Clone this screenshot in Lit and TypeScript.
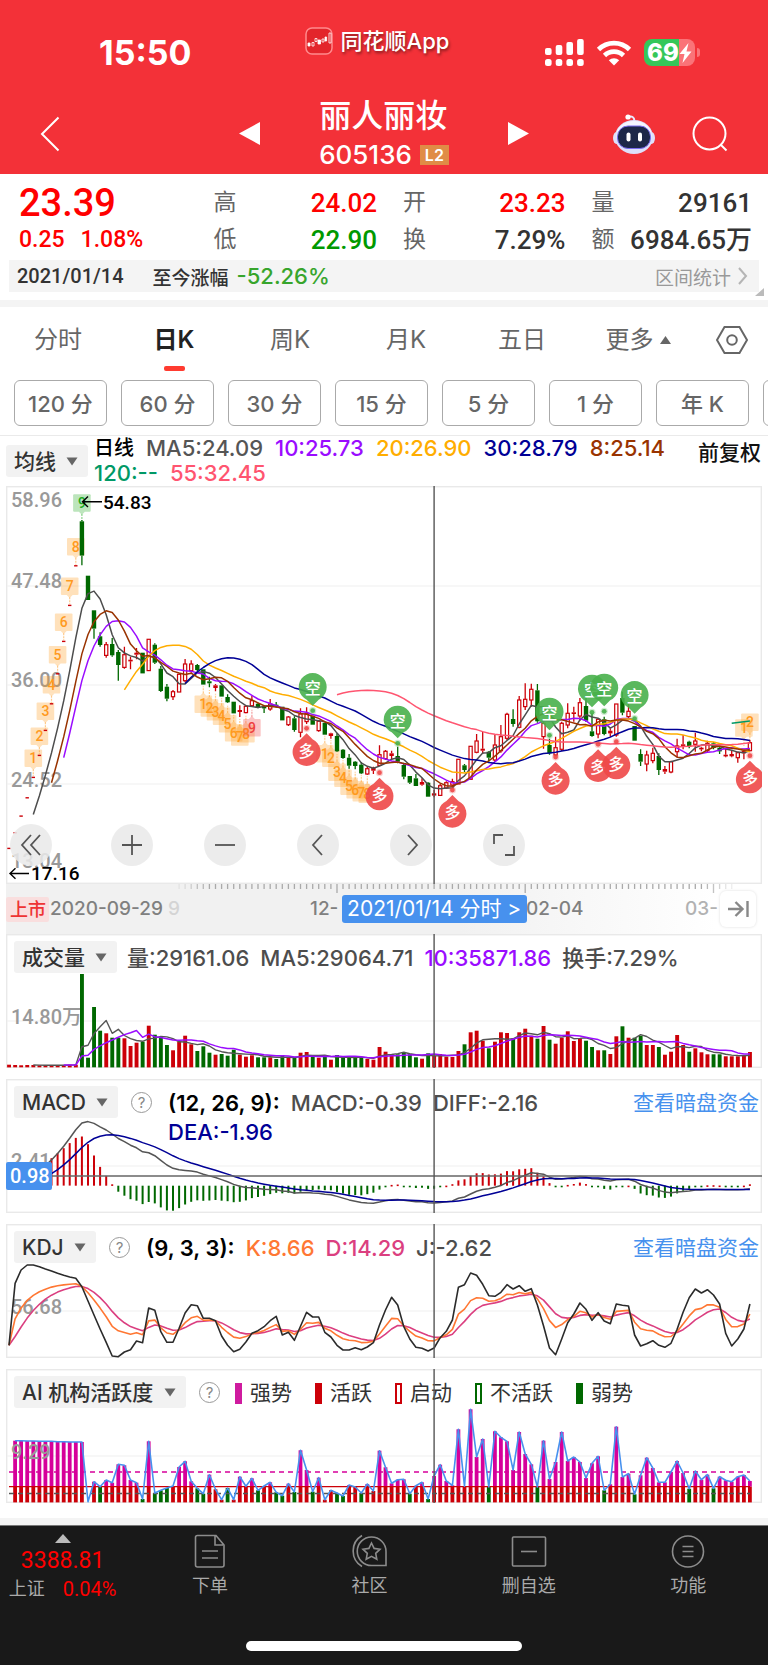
import { LitElement, html, svg, css, nothing } from "lit";
import { customElement, property } from "lit/decorators.js";

/* ---------- market data ---------- */

/** One trading day: high, body top, body bottom, low (chart units, 0 = top), r = up / g = down. */
type Day = [number, number, number, number, "r" | "g"];

const flat = (y: number): Day => [y, y, y, y, "r"];

const DAYS: Day[] = [
  ...[1105, 1058, 1008, 953, 892, 826, 751, 671, 581, 484, 376, 257].map(flat),
  [120, 124, 227, 256, "g"], [287, 287, 360, 360, "g"], [391, 391, 446, 476, "g"], [457, 469, 495, 500, "g"],
  [486, 494, 526, 533, "r"], [474, 492, 526, 530, "g"], [510, 516, 555, 602, "g"], [500, 524, 562, 566, "r"],
  [530, 539, 544, 568, "r"], [504, 518, 524, 538, "r"], [518, 518, 580, 580, "g"], [478, 478, 572, 572, "r"],
  [490, 494, 548, 552, "g"], [558, 566, 633, 636, "g"], [612, 620, 656, 664, "g"], [630, 635, 650, 660, "r"],
  [583, 583, 636, 636, "r"], [537, 552, 602, 607, "r"], [541, 552, 572, 578, "r"], [552, 555, 570, 574, "g"],
  [568, 568, 614, 614, "g"], [590, 604, 610, 622, "g"], [612, 616, 624, 634, "r"], [616, 616, 650, 650, "g"],
  [643, 651, 667, 669, "g"], [665, 665, 700, 700, "g"], [676, 690, 696, 711, "r"], [676, 679, 698, 700, "r"],
  [647, 662, 677, 681, "r"], [668, 671, 683, 685, "g"], [676, 680, 685, 699, "g"], [657, 672, 687, 692, "r"],
  [666, 674, 679, 683, "g"], [680, 680, 721, 721, "g"], [709, 711, 734, 738, "r"], [709, 715, 750, 755, "g"],
  [685, 702, 757, 772, "r"], [682, 700, 725, 732, "r"], [707, 707, 734, 734, "g"], [720, 724, 752, 755, "r"],
  [728, 728, 764, 764, "g"], [758, 760, 768, 776, "r"], [760, 768, 814, 816, "g"], [807, 809, 834, 836, "g"],
  [822, 833, 857, 866, "g"], [843, 845, 858, 868, "g"], [846, 854, 880, 882, "g"], [860, 866, 882, 884, "r"],
  [860, 864, 872, 882, "r"], [796, 824, 856, 858, "r"], [810, 814, 836, 840, "r"],
  [812, 820, 828, 840, "r"], [800, 828, 845, 850, "g"], [848, 855, 890, 898, "g"], [888, 888, 908, 912, "g"],
  [882, 895, 918, 918, "g"], [895, 906, 914, 917, "r"], [906, 908, 950, 950, "g"], [930, 940, 947, 952, "r"],
  [912, 917, 946, 948, "r"], [904, 908, 924, 926, "r"], [896, 905, 915, 920, "r"], [838, 838, 912, 912, "r"],
  [852, 856, 870, 876, "g"], [799, 799, 898, 898, "r"], [762, 783, 817, 820, "r"], [755, 806, 812, 822, "r"],
  [813, 815, 833, 845, "g"], [765, 795, 840, 845, "r"], [735, 770, 812, 818, "r"], [698, 703, 775, 780, "r"],
  [688, 717, 732, 740, "g"], [648, 660, 742, 745, "r"], [610, 658, 680, 690, "r"], [611, 628, 660, 680, "r"],
  [612, 631, 724, 728, "g"], [722, 730, 770, 806, "r"], [776, 795, 820, 824, "g"], [770, 803, 825, 828, "r"],
  [725, 730, 808, 813, "r"], [670, 700, 735, 745, "r"], [680, 697, 702, 725, "r"], [654, 668, 708, 722, "r"],
  [650, 678, 722, 726, "g"], [700, 754, 768, 770, "g"], [715, 718, 762, 775, "r"], [710, 718, 762, 766, "g"],
  [745, 752, 760, 770, "r"], [672, 672, 765, 770, "r"], [635, 654, 698, 706, "g"], [670, 694, 710, 716, "r"],
  [738, 738, 782, 782, "g"], [808, 822, 845, 858, "g"], [812, 825, 852, 874, "r"], [803, 820, 842, 850, "r"],
  [820, 828, 870, 885, "g"], [858, 867, 875, 882, "r"], [842, 845, 876, 880, "r"], [776, 798, 815, 832, "r"],
  [765, 793, 800, 808, "r"], [782, 785, 800, 805, "g"], [758, 783, 793, 815, "r"], [800, 803, 808, 814, "r"],
  [782, 790, 812, 818, "r"], [786, 790, 804, 808, "g"], [798, 803, 814, 822, "g"], [806, 824, 829, 832, "r"],
  [810, 822, 829, 832, "r"], [815, 818, 833, 848, "r"], [806, 812, 820, 838, "r"], [780, 788, 812, 814, "r"],
];

const VOLUME = [
  419, 420, 421, 420, 420, 421, 421, 421, 420, 420, 419, 419, 147, 398, 246, 317, 325, 338, 338, 340, 363, 353, 350,
  302, 329, 337, 360, 376, 350, 332, 358, 378, 364, 383, 389, 387, 392, 374, 389, 395, 391, 397, 397, 397, 402, 390,
  399, 399, 383, 381, 395, 398, 395, 404, 390, 397, 398, 398, 398, 402, 404, 366, 380, 391, 388, 383, 388, 397, 401,
  385, 392, 387, 395, 396, 378, 358, 322, 317, 347, 370, 350, 322, 324, 341, 322, 311, 332, 341, 303, 344, 356, 338,
  319, 348, 340, 347, 366, 376, 376, 387, 334, 304, 338, 338, 332, 360, 360, 366, 389, 380, 330, 360, 380, 370, 382,
  388, 388, 388, 394, 394, 394, 390, 381,
];

const KDJ_J = [
  391, 205, 165, 150, 150, 155, 162, 168, 175, 181, 186, 190, 215, 258, 300, 342, 382, 423, 425, 411, 404, 378, 383,
  279, 286, 350, 382, 382, 340, 294, 269, 272, 310, 310, 317, 363, 391, 410, 403, 381, 355, 347, 335, 317, 304, 360,
  352, 376, 334, 292, 306, 306, 352, 366, 391, 405, 405, 398, 404, 396, 383, 330, 285, 247, 270, 335, 372, 397, 400,
  408, 399, 368, 349, 315, 217, 209, 174, 181, 208, 242, 244, 232, 209, 222, 212, 229, 221, 270, 332, 399, 419, 372,
  323, 297, 264, 283, 316, 293, 318, 326, 267, 271, 273, 360, 393, 386, 377, 391, 397, 385, 343, 292, 248, 222, 234,
  224, 240, 267, 355, 393, 372, 342, 267,
];

const ACTIVITY = [
  862, 677, 677, 678, 678, 679, 679, 679, 680, 680, 681, 681, 681, 860, 800, 815, 795, 803, 748, 751, 795, 803, 852,
  679, 834, 826, 819, 813, 756, 739, 799, 820, 836, 779, 823, 854, 819, 854, 785, 814, 790, 826, 813, 802, 832, 842,
  806, 831, 706, 765, 830, 788, 854, 826, 834, 843, 810, 816, 834, 807, 828, 707, 757, 805, 794, 793, 836, 812, 802,
  852, 783, 749, 798, 811, 643, 814, 583, 726, 672, 816, 649, 667, 679, 765, 651, 717, 748, 816, 677, 792, 741, 651,
  738, 726, 741, 789, 745, 724, 826, 808, 635, 786, 776, 838, 781, 728, 759, 802, 802, 771, 738, 774, 821, 768, 794,
  779, 820, 785, 796, 800, 785, 780, 798,
];
const WEAK_DAYS = new Set([15, 22, 24, 25, 26, 31, 32, 36, 41, 44, 45, 47, 50, 54, 55, 58, 66, 69, 79, 87, 98, 103, 112, 116]);

/** Countdown flags: [day, digit], and [day, digit, y of the flag's centre]. */
const FLAGS_UP: [number, number][] = [[4, 1], [5, 2], [6, 3], [7, 4], [8, 5], [9, 6], [10, 7], [11, 8]];
const FLAGS_DOWN: [number, number, number][] = [
  [32, 1, 673], [33, 2, 684], [34, 3, 695], [35, 4, 709], [36, 5, 731], [37, 6, 758], [38, 7, 771], [39, 8, 761],
  [52, 1, 821], [53, 2, 835], [54, 3, 877], [55, 4, 895], [56, 5, 919], [57, 6, 929], [58, 7, 938], [59, 8, 943],
];
const SELL: [number, number][] = [[50, 692], [64, 790], [89, 766], [96, 697], [98, 694], [103, 716]];
const BUY: [number, number][] = [[49, 745], [61, 878], [73, 930], [90, 831], [97, 793], [100, 785], [122, 827]];

/* ---------- geometry ---------- */

const CURSOR_DAY = 70;
const UNIT = 3;
const X = (i: number) => 3 + (i * 18.22) / UNIT;
const n = (v: number) => Math.round(v * 10) / 10;
const scale = (origin: number) => (v: number) => (v - origin) / UNIT;

const RED = "#cc0008";
const GREEN = "#006800";

function average(values: number[], span: number): (number | null)[] {
  let sum = 0;
  return values.map((v, i) => {
    sum += v;
    if (i >= span) sum -= values[i - span];
    return i >= span - 1 ? sum / span : null;
  });
}

function ema(values: number[], span: number): number[] {
  let last = values[0];
  return values.map((v) => (last += ((v - last) * 2) / (span + 1)));
}

function line(values: (number | null)[], y: (v: number) => number, color: string, width = 1.4) {
  const points = values.map((v, i) => (v === null ? "" : `${n(X(i))},${n(y(v))}`)).filter(Boolean).join(" ");
  return svg`<polyline points=${points} fill="none" stroke=${color} stroke-width=${width} stroke-linejoin="round"></polyline>`;
}

const CLOSES = DAYS.map((d) => (d[4] === "r" ? d[1] : d[2]));

const cursor = (h: number) =>
  svg`<line x1=${n(X(CURSOR_DAY))} x2=${n(X(CURSOR_DAY))} y1="0" y2=${h} stroke="#555" stroke-width="1.4"></line>`;

const frame = (h: number, ...grid: number[]) => svg`
  <rect x="0.7" y="0.7" width="754.6" height=${h - 1.4} fill="none" stroke="#e9e9e9" stroke-width="1.4"></rect>
  ${grid.map((g) => svg`<line x1="1" x2="755" y1=${g} y2=${g} stroke="#efefef" stroke-width="1.2"></line>`)}`;

/* ---------- plots ---------- */

function pricePlot() {
  const y = scale(18);
  const candle = ([h, t, b, l, c]: Day, i: number) => {
    const x = n(X(i));
    const color = c === "r" ? RED : GREEN;
    if (h === l) return svg`<rect x=${n(x - 1.7)} y=${n(y(t) - 0.6)} width="3.4" height="1.4" fill=${color}></rect>`;
    const solid = c === "g" || b - t < 9;
    return svg`
      <path d="M${x} ${n(y(h))}V${n(y(t))}M${x} ${n(y(b))}V${n(y(l))}" stroke=${color} stroke-width="1.3"></path>
      <rect x=${n(x - (solid ? 2.2 : 1.6))} y=${n(y(t))} width=${solid ? 4.4 : 3.2}
        height=${n((b - t) / UNIT)} fill=${solid ? color : "#fff"} stroke=${solid ? "none" : color} stroke-width="1.2"></rect>`;
  };
  const flag = (i: number, digit: number, cy: number, kind = "orange", tip = 1) => {
    const x = n(X(i));
    const c = n(y(cy));
    return svg`
      <g class="flag ${kind}">
        <rect x=${n(x - 8.8)} y=${n(c - 8.8)} width="17.6" height="17.6" rx="1"></rect>
        <path d="M${n(x - 3)} ${n(c + 8.8 * tip)}h6l-3 ${3 * tip}z"></path>
        <line x1=${x} x2=${x} y1=${n(c + 11 * tip)} y2=${n(c + 18 * tip)}></line>
        <text x=${x} y=${n(c + 5)}>${digit}</text>
      </g>`;
  };
  const balloon = (i: number, dot: number, label: string, color: string, dir: number) => {
    const x = n(X(i));
    const d = y(dot);
    const c = n(d + 22.3 * dir);
    return svg`
      <g fill=${color}>
        <circle cx=${x} cy=${n(d)} r="3.6" opacity="0.25"></circle>
        <circle cx=${x} cy=${n(d)} r="2.4" opacity="0.9"></circle>
        <g opacity="0.9">
          <path d="M${x} ${n(d + 5 * dir)}L${n(x - 6)} ${n(d + 11 * dir)}A14 14 0 1 ${dir > 0 ? 0 : 1} ${n(x + 6)} ${n(d + 11 * dir)}Z"></path>
        </g>
        <text class="mark" x=${x} y=${n(c + 6)}>${label}</text>
      </g>`;
  };
  const averages: [number, string][] = [
    [5, "#4d4d4d"], [10, "#9a0cff"], [20, "#ffad00"], [30, "#000096"], [8, "#993300"], [120, "#009966"], [55, "#ff5570"],
  ];
  const levels: [string, number][] = [["58.96", 21], ["47.48", 102], ["36.00", 201], ["24.52", 301], ["13.04", 382]];
  const ticks = Array.from({ length: 92 }, (_, k) => k + 28);
  return svg`
    ${frame(398, 100, 199, 298)}
    ${levels.map(([t, ty]) => svg`<text class="level" x="5" y=${ty}>${t}</text>`)}
    ${FLAGS_UP.map(([i, d]) => flag(i, d, DAYS[i][1] - 57))}
    ${FLAGS_DOWN.map(([i, d, cy]) => flag(i, d, cy, "orange", -1))}
    ${flag(40, 9, 743, "pink", -1)}
    ${flag(12, 9, 69, "green")}
    ${flag(121, 1, 744)}${flag(122, 2, 727)}
    ${DAYS.map(candle)}
    ${averages.map(([span, color]) => line(average(CLOSES, span), y, color, 1.5))}
    ${SELL.map(([i, d]) => balloon(i, d, "空", "#48b04b", -1))}
    ${BUY.map(([i, d]) => balloon(i, d, "多", "#ee4848", 1))}
    <g stroke="#000" stroke-width="1.4" fill="none">
      <path d="M96 15.700H76.500M82 10.500L76.500 15.700L82 21"></path>
      <path d="M23 387.500H4M9.500 382.300L4 387.500L9.500 392.700"></path>
    </g>
    <text class="extreme" x="97" y="23">54.83</text>
    <text class="extreme" x="25" y="394">17.16</text>
    ${ticks.map((i) => {
      const long = i === 54 || i === 85 || i === 116;
      const fade = Math.min(1, (i - 27) / 6, (120 - i) / 6);
      return svg`<line x1=${n(X(i))} x2=${n(X(i))} y1="398" y2=${long ? 407 : 403} stroke="#aaa" stroke-width="1.3" opacity=${n(fade)}></line>`;
    })}
    <rect x="0" y="411" width="43" height="25" rx="2" fill="#f9dede"></rect>
    <text class="listed" x="4" y="430">上市</text>
    <text class="date" x="44" y="429">2020-09-29</text>
    <text class="date faint" x="162" y="429">9</text>
    <text class="date" x="304" y="429">12-</text>
    <text class="date" x="520" y="429">02-04</text>
    <text class="date soft" x="679" y="429">03-</text>
    ${cursor(398)}`;
}

function volumePlot() {
  const y = scale(27);
  return svg`
    ${frame(134, 87)}
    <text class="level" x="5" y="90">14.80万</text>
    ${VOLUME.map((v, i) => svg`<rect x=${n(X(i) - 1.9)} y=${n(y(v))} width="3.9" height=${n((427 - v) / UNIT)} fill=${DAYS[i][4] === "r" ? RED : GREEN}></rect>`)}
    ${line(average(VOLUME, 5), y, "#555")}
    ${line(average(VOLUME, 10), y, "#9a0cff", 1.5)}
    ${cursor(134)}`;
}

function macdPlot() {
  const y = (v: number) => (782 - 24.3 * v - 462) / UNIT;
  const price = CLOSES.map((c) => 58.96 - (c - 19) / 25.94);
  const slow = ema(price, 26);
  const diff = ema(price, 12).map((v, i) => v - slow[i]);
  const dea = ema(diff, 9);
  return svg`
    ${frame(134, 87)}
    <text class="level" x="5" y="89">2.41</text>
    ${diff.map((d, i) => {
      const bar = 2 * (d - dea[i]);
      const top = Math.min(y(bar), y(0));
      return svg`<rect x=${n(X(i) - 1)} y=${n(top)} width="2" height=${n(Math.max(1.6, Math.abs(y(bar) - y(0))))} fill=${bar > 0 ? RED : GREEN}></rect>`;
    })}
    ${line(diff, y, "#555", 1.5)}
    ${line(dea, y, "#000096", 1.5)}
    <line x1="0" x2="756" y1="97" y2="97" stroke="#666" stroke-width="1.4"></line>
    <rect x="0" y="83" width="46" height="28" rx="2" fill="#4791ee"></rect>
    <text class="value" x="4" y="104">0.98</text>
    ${cursor(134)}`;
}

function kdjPlot() {
  const y = scale(27);
  let last = KDJ_J[0];
  const k: number[] = [];
  const d: number[] = [];
  for (const j of KDJ_J) {
    const now = (3 * j + 4 * last) / 7;
    last = (2 * last + now) / 3;
    k.push(now);
    d.push(last);
  }
  return svg`
    ${frame(134, 87)}
    <text class="level" x="5" y="90">56.68</text>
    ${line(d, y, "#db3f80", 1.6)}
    ${line(k, y, "#ff7733", 1.6)}
    ${line(KDJ_J, y, "#2b2b2b", 1.6)}
    ${cursor(134)}`;
}

function activityPlot() {
  const y = scale(462);
  const base = y(862);
  const mid = y(815);
  const values = ACTIVITY.map((v, i) => (i === 0 ? null : v));
  return svg`
    ${frame(134, 87)}
    ${ACTIVITY.map((v, i) => {
      if (v > 858) return nothing;
      const x = n(X(i) - 1.9);
      const top = Math.max(y(v), mid);
      return svg`
        ${v < 815 ? svg`<rect x=${x} y=${n(y(v))} width="3.8" height=${n(mid - y(v))} fill="#d6009a"></rect>` : nothing}
        <rect x=${x} y=${n(top)} width="3.8" height=${n(base - top)} fill=${WEAK_DAYS.has(i) ? GREEN : RED}></rect>`;
    })}
    <text class="level" x="5" y="90">9.29</text>
    <line x1="3" x2="744" y1="103" y2="103" stroke="#d6009a" stroke-width="1.6" stroke-dasharray="5 4"></line>
    <line x1="3" x2="744" y1=${n(mid)} y2=${n(mid)} stroke=${RED} stroke-width="1.2"></line>
    <line x1="3" x2="744" y1="124.500" y2="124.500" stroke="#555" stroke-width="1.3" stroke-dasharray="5 4"></line>
    ${line(values, y, "#4791ee", 1.6)}
    ${cursor(134)}`;
}

/* ---------- elements ---------- */

const plotText = css`
  text { font-family: Roboto, "Noto Sans CJK SC", sans-serif; }
  .level { font-size: 20px; fill: #999; }
  .extreme { font-size: 19px; font-weight: 500; fill: #000; }
  .value { font-size: 20px; fill: #fff; }
  .date { font-family: Inter, sans-serif; font-size: 19px; fill: #808080; }
  .faint { opacity: 0.25; }
  .soft { opacity: 0.6; }
  .listed { font-size: 18px; fill: #ee3333; }
  .mark { font-size: 16px; fill: #fff; text-anchor: middle; }
  .flag rect, .flag path { opacity: 0.3; }
  .flag line { stroke-width: 1.2; stroke-dasharray: 2 1; opacity: 0.5; }
  .flag text { font-size: 14px; text-anchor: middle; stroke: none; }
  .orange { fill: #ff9a1e; stroke: none; }
  .orange line { stroke: #ff9a1e; }
  .pink { fill: #ee4040; }
  .pink line { stroke: #ee4040; }
  .green { fill: #22aa22; }
  .green line { stroke: #22aa22; }
`;

const caret = html`<svg class="caret" viewBox="0 0 12 9" aria-hidden="true"><path d="M0.500 0.500h11L6 8.500z" fill="#666"></path></svg>`;
const help = html`<button class="help" aria-label="指标说明">?</button>`;

@customElement("indicator-select")
export class IndicatorSelect extends LitElement {
  @property() name = "";
  static styles = css`
    :host { display: block; flex: none; }
    .pick { display: flex; align-items: center; gap: 10px; height: 32px; padding: 0 10px 0 8px; border-radius: 3px; background: #f2f2f2; }
    select {
      appearance: none; border: 0; margin: 0; padding: 0; background: none; color: #333;
      font: 500 21px Inter, "Noto Sans CJK SC", sans-serif;
    }
    .caret { width: 12px; height: 9px; flex: none; }
  `;
  render() {
    return html`<label class="pick"><select aria-label=${this.name}><option>${this.name}</option></select>${caret}</label>`;
  }
}

@customElement("app-root")
export class AppRoot extends LitElement {
  static styles = [
    plotText,
    css`
      :host { display: block; background: #fff; color: #333; font: 500 20px Inter, "Noto Sans CJK SC", sans-serif; }
      * { box-sizing: border-box; }
      button { border: 0; margin: 0; padding: 0; background: none; color: inherit; font: inherit; }
      a { color: #4791ee; text-decoration: none; font-size: 21px; font-weight: 400; }
      svg { display: block; }
      .num { font-family: Roboto, "Noto Sans CJK SC", sans-serif; }
      .up { color: #ff0000; }
      .down { color: #009900; }

      header { background: #f33138; color: #fff; }
      .status { display: grid; grid-template-columns: 1fr auto 1fr; align-items: start; height: 93px; padding: 0 68px 0 54px; }
      .time { padding: 33px 0 0 45px; font-size: 34px; line-height: 40px; font-weight: 700; }
      .source { display: flex; align-items: center; gap: 8px; padding-top: 26px; line-height: 30px; font-size: 22px; text-shadow: 1px 2px 3px #0007; }
      .source svg { width: 28px; height: 28px; }
      .system { display: flex; justify-content: flex-end; align-items: center; gap: 12px; padding-top: 39px; }
      .battery { display: flex; align-items: center; gap: 2px; }
      .cell { display: flex; align-items: center; width: 51px; height: 27px; padding-left: 3px; border-radius: 8px; font-size: 24px; font-weight: 800; line-height: 27px; background: linear-gradient(90deg, #35c759 69%, #fa7378 69%); }
      .nub { width: 3px; height: 9px; border-radius: 0 3px 3px 0; background: #fa7378; }
      .bar { display: grid; grid-template-columns: 1fr 290px 1fr; align-items: center; height: 81px; padding: 0 40px; }
      .bar > .tools { display: flex; justify-content: flex-end; align-items: center; gap: 36px; }
      .swap { display: flex; align-items: center; justify-content: space-between; }
      h1 { margin: 0; font-size: 32px; line-height: 42px; font-weight: 500; }
      .code { display: flex; align-items: center; gap: 8px; font-size: 26px; line-height: 36px; }
      .level2 { width: 29px; height: 20px; background: #e08c46; font-size: 16px; font-weight: 600; line-height: 20px; text-align: center; }

      .quote { display: grid; grid-template-columns: 168fr 163fr 162fr 160fr; column-gap: 26px; padding: 9px 16px 3px 19px; }
      .quote div { display: flex; justify-content: space-between; align-items: center; white-space: nowrap; font-size: 26px; line-height: 34px; height: 35px; }
      .quote .row1 { height: 39px; }
      .quote span { color: #666; font-size: 23px; font-weight: 400; }
      .quote b { font-weight: 500; }
      .quote .last { font-size: 38px; }
      .quote .change { justify-content: flex-start; gap: 16px; font-size: 23px; }
      .span { display: flex; align-items: center; margin: 0 9px; padding: 0 10px 0 8px; height: 32px; background: #f4f4f4; }
      .span .since { margin: 0 8px 0 29px; font-size: 19px; }
      .span .fall { color: #37a52c; flex: 1; font-size: 22px; }
      .span button { display: flex; align-items: center; gap: 6px; color: #999; font-weight: 400; font-size: 19px; }
      .corner { display: block; margin: -4px 4px 4px auto; }
      .band { height: 7px; background: #f4f4f4; }

      .tabs { display: grid; grid-template-columns: repeat(6, 116fr) 72fr; height: 69px; }
      .tab { display: flex; flex-direction: column; align-items: center; padding-top: 16px; color: #666; font-size: 24px; line-height: 34px; font-weight: 400; }
      .tab > span { display: flex; align-items: center; gap: 6px; }
      .tab.on { color: #222; font-weight: 600; }
      .tab.on::after { content: ""; width: 21px; height: 5px; margin-top: 9px; border-radius: 2px; background: #ff3b30; }
      .periods { display: flex; gap: 14px; overflow: hidden; padding: 4px 0 9px 14px; }
      .periods button { flex: 0 0 93px; height: 46px; border: 1px solid #aaa; border-radius: 6px; padding-bottom: 2px; color: #666; font-size: 22px; }
      .averages { display: flex; align-items: flex-start; border-top: 1px solid #eaeaea; padding: 0 7px 0 6px; }
      .averages indicator-select { margin: 9px 6px 0 0; }
      .list { display: flex; flex-wrap: wrap; flex: 1; column-gap: 12px; font-size: 22px; line-height: 25px; }
      .list .kind { color: #000; font-size: 20px; }
      .adjust { flex: none; padding-top: 4px; color: #111; font-size: 21px; line-height: 25px; }

      .chart { display: grid; position: relative; margin: 0 6px; }
      .chart > * { grid-area: 1 / 1; min-width: 0; }
      .chart > svg { width: 100%; pointer-events: none; }
      .chart + .chart { margin-top: 11px; }
      .price { background: linear-gradient(#fff 0 0) top / 100% 397px no-repeat, linear-gradient(90deg, #f1f1f1 60%, #fff 94%); }
      .price.chart + .chart { margin-top: 0; }
      .pad { align-self: end; display: flex; gap: 51px; margin: 0 0 68px 4px; }
      .pad button { display: grid; place-items: center; width: 42px; height: 42px; border-radius: 50%; background: #e9e9e9dd; }
      .pad button:first-child { margin-right: 8px; }
      .pick-day { position: absolute; left: 44.4%; bottom: 11px; width: 185px; height: 28px; border-radius: 3px; background: #4791ee; color: #fff; font-size: 21px; font-weight: 400; line-height: 26px; white-space: nowrap; }
      .latest { position: absolute; right: 6px; bottom: 7px; display: grid; place-items: center; width: 36px; height: 36px; border-radius: 6px; background: #fff; box-shadow: 0 0 3px #0002; }
      .head { display: flex; align-items: flex-start; padding: 7px 3px 0 8px; color: #4d4d4d; font-size: 22px; line-height: 34px; white-space: nowrap; }
      .set { display: flex; gap: 11px; margin-left: 10px; }
      .params { margin-left: 16px; flex: 1; }
      .params > div { display: flex; gap: 11px; }
      .params > div + div { line-height: 24px; }
      .params b { color: #000; font-weight: 600; }
      .help { width: 21px; height: 21px; margin: 6px 0 0 13px; border: 1px solid #999; border-radius: 50%; color: #888; font-size: 15px; font-weight: 400; line-height: 18px; }
      .legend { display: flex; gap: 23px; margin-left: 15px; font-size: 21px; font-weight: 400; color: #333; }
      .legend span { display: flex; align-items: center; gap: 8px; }
      .legend i { width: 7px; height: 21px; border: 2px solid; }

      .dock { margin-top: 15px; }
      nav { display: grid; grid-template-columns: 130fr repeat(4, 159fr); height: 116px; padding-top: 8px; background: #191919; color: #aaa; border-top: 1px solid #777; }
      .index { display: flex; flex-direction: column; align-items: center; padding-right: 5px; }
      .index .points { font-size: 23px; line-height: 30px; margin-top: 3px; font-weight: 400; }
      .index .pct { display: flex; gap: 18px; font-size: 18px; line-height: 26px; font-weight: 400; }
      .index .pct b { font-size: 20px; font-weight: 400; }
      .item { display: flex; flex-direction: column; align-items: center; gap: 6px; font-size: 18px; line-height: 24px; font-weight: 400; }
      .home { display: grid; justify-items: center; height: 24px; background: #191919; }
      .home i { width: 36%; height: 10px; border-radius: 5px; background: #fff; }
    `,
  ];

  private item(label: string, icon: unknown) {
    return html`<button class="item">
      <svg width="36" height="34" viewBox="0 0 36 34" fill="none" stroke="#8c8c8c" stroke-width="1.600" aria-hidden="true">${icon}</svg>
      <span>${label}</span>
    </button>`;
  }

  private ctl(label: string, d: string) {
    return html`<button aria-label=${label}>
      <svg width="24" height="24" viewBox="0 0 24 24" fill="none" stroke="#555" stroke-width="1.800" aria-hidden="true"><path d=${d}></path></svg>
    </button>`;
  }

  private quote() {
    return html`
      <section class="quote num">
        <div class="row1 up"><b class="last">23.39</b></div>
        <div class="row1"><span>高</span><b class="up">24.02</b></div>
        <div class="row1"><span>开</span><b class="up">23.23</b></div>
        <div class="row1"><span>量</span><b>29161</b></div>
        <div class="change up"><b>0.25</b><b>1.08%</b></div>
        <div><span>低</span><b class="down">22.90</b></div>
        <div><span>换</span><b>7.29%</b></div>
        <div><span>额</span><b>6984.65万</b></div>
      </section>
      <section class="span">
        <span class="num">2021/01/14</span><span class="since">至今涨幅</span><span class="fall">-52.26%</span>
        <button>区间统计<svg width="12" height="18" viewBox="0 0 12 18" fill="none" stroke="#b5b5b5" stroke-width="2"><path d="M2 1l7 8l-7 8"></path></svg></button>
      </section>
      <svg class="corner" width="9" height="8" viewBox="0 0 9 8" aria-hidden="true"><path d="M9 0v8H0z" fill="#bbb"></path></svg>`;
  }

  render() {
    return html`
      <header>
        <div class="status">
          <div class="time">15:50</div>
          <div class="source">
            <svg viewBox="0 0 28 28" aria-hidden="true">
              <rect x="1" y="1" width="26" height="26" rx="6" fill="#e3252b" stroke="#ff8a8d" stroke-width="1.500"></rect>
              <g fill="#fff" stroke="#fff" stroke-width="0.800">
                <path d="M3 16h2v3H3zM13 13h2.500v4H13zM20 10h1.600v4H20z"></path>
                <path d="M7 15.500h2v3.500H7zM10 11.500h2v3h-2zM17 12h2v3h-2zM24 6h2v10h-2z" fill="none"></path>
              </g>
            </svg>
            <span>同花顺App</span>
          </div>
          <div class="system">
            <svg width="39" height="27" viewBox="0 0 39 27" fill="#fff" aria-hidden="true">
              ${[0, 1, 2, 3].map((i) => svg`
                <rect x=${i * 10.7} y=${[9, 6, 3, 0][i]} width="6.600" height=${[7, 10, 13, 16][i]} rx="2"></rect>
                <rect x=${i * 10.7} y="20" width="6.600" height="7" rx="2.500"></rect>`)}
            </svg>
            <svg width="36" height="26" viewBox="0 0 36 26" fill="none" stroke="#fff" stroke-width="4.600" aria-hidden="true">
              <path d="M2.500 9.500a22 22 0 0 1 31 0M8.500 15.500a13.500 13.500 0 0 1 19 0"></path>
              <path d="M18 25.500l-5.200-5.200a7.500 7.500 0 0 1 10.400 0z" fill="#fff" stroke="none"></path>
            </svg>
            <div class="battery">
              <div class="cell">69<svg width="13" height="20" viewBox="0 0 13 20" aria-hidden="true"><path d="M9.500 0L0.500 11h5l-2 9l9-11.500h-5z" fill="#fff"></path></svg></div>
              <div class="nub"></div>
            </div>
          </div>
        </div>
        <div class="bar">
          <button aria-label="返回"><svg width="20" height="36" viewBox="0 0 20 36" fill="none" stroke="#fff" stroke-width="2"><path d="M18.500 1.500L2 18l16.500 16.500"></path></svg></button>
          <div class="swap">
            <button aria-label="上一只"><svg width="21" height="23" viewBox="0 0 21 23"><path d="M21 0v23L0 11.500z" fill="#fff"></path></svg></button>
            <div>
              <h1>丽人丽妆</h1>
              <div class="code">605136<span class="level2">L2</span></div>
            </div>
            <button aria-label="下一只"><svg width="21" height="23" viewBox="0 0 21 23"><path d="M0 0v23l21-11.500z" fill="#fff"></path></svg></button>
          </div>
          <div class="tools">
            <button aria-label="助手">
              <svg width="44" height="40" viewBox="0 0 44 40">
                <path d="M16 3q6-2 6.500 4" fill="none" stroke="#e8e8ff" stroke-width="2"></path>
                <circle cx="16" cy="3" r="2.600" fill="#fff"></circle>
                <ellipse cx="4.500" cy="24" rx="3.500" ry="6" fill="#dfe0fa"></ellipse>
                <ellipse cx="39.500" cy="24" rx="3.500" ry="6" fill="#dfe0fa"></ellipse>
                <ellipse cx="22" cy="23" rx="19" ry="17" fill="#dedffa"></ellipse>
                <ellipse cx="22" cy="21" rx="17.500" ry="14" fill="#f5f5ff"></ellipse>
                <rect x="5.500" y="12" width="33" height="22.500" rx="10.500" fill="#1d2748" stroke="#7a6cf0" stroke-width="1"></rect>
                <rect x="14.500" y="18.500" width="4" height="9" rx="2" fill="#fff"></rect>
                <rect x="26" y="18.500" width="4" height="9" rx="2" fill="#fff"></rect>
              </svg>
            </button>
            <button aria-label="搜索"><svg width="36" height="36" viewBox="0 0 36 36" fill="none" stroke="#fff" stroke-width="2"><circle cx="17.500" cy="17.500" r="16"></circle><path d="M28.500 28.500l6 6"></path></svg></button>
          </div>
        </div>
      </header>

      ${this.quote()}
      <div class="band"></div>

      <div class="tabs">
        ${["分时", "日K", "周K", "月K", "五日"].map((t) => html`<button class="tab ${t === "日K" ? "on" : ""}"><span>${t}</span></button>`)}
        <button class="tab"><span>更多<svg width="11" height="8" viewBox="0 0 11 8"><path d="M5.500 0L11 8H0z" fill="#666"></path></svg></span></button>
        <button class="tab" aria-label="设置">
          <svg width="32" height="34" viewBox="0 0 32 34" fill="none" stroke="#666" stroke-width="2"><path d="M8.500 4h15L31 17l-7.500 13h-15L1 17z"></path><circle cx="16" cy="17" r="4.800"></circle></svg>
        </button>
      </div>
      <div class="periods">
        ${["120 分", "60 分", "30 分", "15 分", "5 分", "1 分", "年 K"].map((p) => html`<button>${p}</button>`)}
        <button aria-label="更多周期"></button>
      </div>

      <div class="averages">
        <indicator-select name="均线"></indicator-select>
        <div class="list">
          <span class="kind">日线</span>
          ${([
            ["MA5:24.09", "#555"], ["10:25.73", "#9a0cff"], ["20:26.90", "#ffad00"], ["30:28.79", "#000096"],
            ["8:25.14", "#993300"], ["120:--", "#009966"], ["55:32.45", "#ff5570"],
          ] as const).map(([t, c]) => html`<span style="color:${c}">${t}</span>`)}
        </div>
        <button class="adjust">前复权</button>
      </div>

      <section class="chart price">
        <svg viewBox="0 0 756 448">${pricePlot()}</svg>
        <div class="pad">
          ${this.ctl("最早", "M12 2L3 12l9 10M21 2l-9 10l9 10")}
          ${this.ctl("放大", "M12 2v20M2 12h20")}
          ${this.ctl("缩小", "M2 12h20")}
          ${this.ctl("向左", "M16 2L7 12l9 10")}
          ${this.ctl("向右", "M9 2l9 10l-9 10")}
          ${this.ctl("全屏", "M2 11V2h9M22 13v9h-9")}
        </div>
        <button class="pick-day">2021/01/14 分时 &gt;</button>
        <button class="latest" aria-label="最新">
          <svg width="22" height="18" viewBox="0 0 22 18" fill="none" stroke="#888" stroke-width="2.400"><path d="M1 9h14M8.500 2l7 7l-7 7M20.500 1v16"></path></svg>
        </button>
      </section>

      <section class="chart">
        <div class="head">
          <indicator-select name="成交量"></indicator-select>
          <div class="set"><span>量:29161.06</span><span>MA5:29064.71</span><span style="color:#9a0cff">10:35871.86</span><span>换手:7.29%</span></div>
        </div>
        <svg viewBox="0 0 756 134">${volumePlot()}</svg>
      </section>

      <section class="chart">
        <div class="head">
          <indicator-select name="MACD"></indicator-select>${help}
          <div class="params">
            <div><b>(12, 26, 9):</b><span>MACD:-0.39</span><span>DIFF:-2.16</span></div>
            <div style="color:#000096">DEA:-1.96</div>
          </div>
          <a href="#funds">查看暗盘资金</a>
        </div>
        <svg viewBox="0 0 756 134">${macdPlot()}</svg>
      </section>

      <section class="chart">
        <div class="head">
          <indicator-select name="KDJ"></indicator-select>${help}
          <div class="params">
            <div><b>(9, 3, 3):</b><span style="color:#ff7733">K:8.66</span><span style="color:#db3f80">D:14.29</span><span>J:-2.62</span></div>
          </div>
          <a href="#funds">查看暗盘资金</a>
        </div>
        <svg viewBox="0 0 756 134">${kdjPlot()}</svg>
      </section>

      <section class="chart">
        <div class="head">
          <indicator-select name="AI 机构活跃度"></indicator-select>${help}
          <div class="legend">
            ${([
              ["强势", "#cf1b9f", true], ["活跃", RED, true], ["启动", RED, false], ["不活跃", GREEN, false], ["弱势", GREEN, true],
            ] as const).map(([t, c, full]) => html`<span><i style="border-color:${c};background:${full ? c : "none"}"></i>${t}</span>`)}
          </div>
        </div>
        <svg viewBox="0 0 756 134">${activityPlot()}</svg>
      </section>

      <footer class="dock">
        <div class="band"></div>
        <nav>
          <button class="index num">
            <svg width="16" height="9" viewBox="0 0 16 9"><path d="M8 0l8 9H0z" fill="#bbb"></path></svg>
            <span class="points up">3388.81</span>
            <span class="pct">上证<b class="up">0.04%</b></span>
          </button>
          ${this.item("下单", svg`<path d="M3.500 3.500q0-2 2-2H24l8 9.500V31q0 2-2 2H5.500q-2 0-2-2zM23 2v9h8M10 17h16M10 24h16"></path>`)}
          ${this.item("社区", svg`<path d="M11 1.500a18 18 0 0 0 0 31M20.500 3a14 14 0 0 0 0 28.500H35V17.500A14.500 14.500 0 0 0 20.500 3z"></path><path d="M20.500 9l2.600 5.400l5.900.8l-4.300 4.100l1.100 5.900l-5.300-2.900l-5.300 2.900l1.100-5.900l-4.300-4.100l5.900-.8z"></path>`)}
          ${this.item("删自选", svg`<rect x="1.500" y="3" width="33" height="29" rx="1"></rect><path d="M10 17.500h16"></path>`)}
          ${this.item("功能", svg`<circle cx="18" cy="17.500" r="15.500"></circle><path d="M12.500 12.500h11M12.500 17.500h11M12.500 22.500h11"></path>`)}
        </nav>
        <div class="home"><i></i></div>
      </footer>`;
  }
}
